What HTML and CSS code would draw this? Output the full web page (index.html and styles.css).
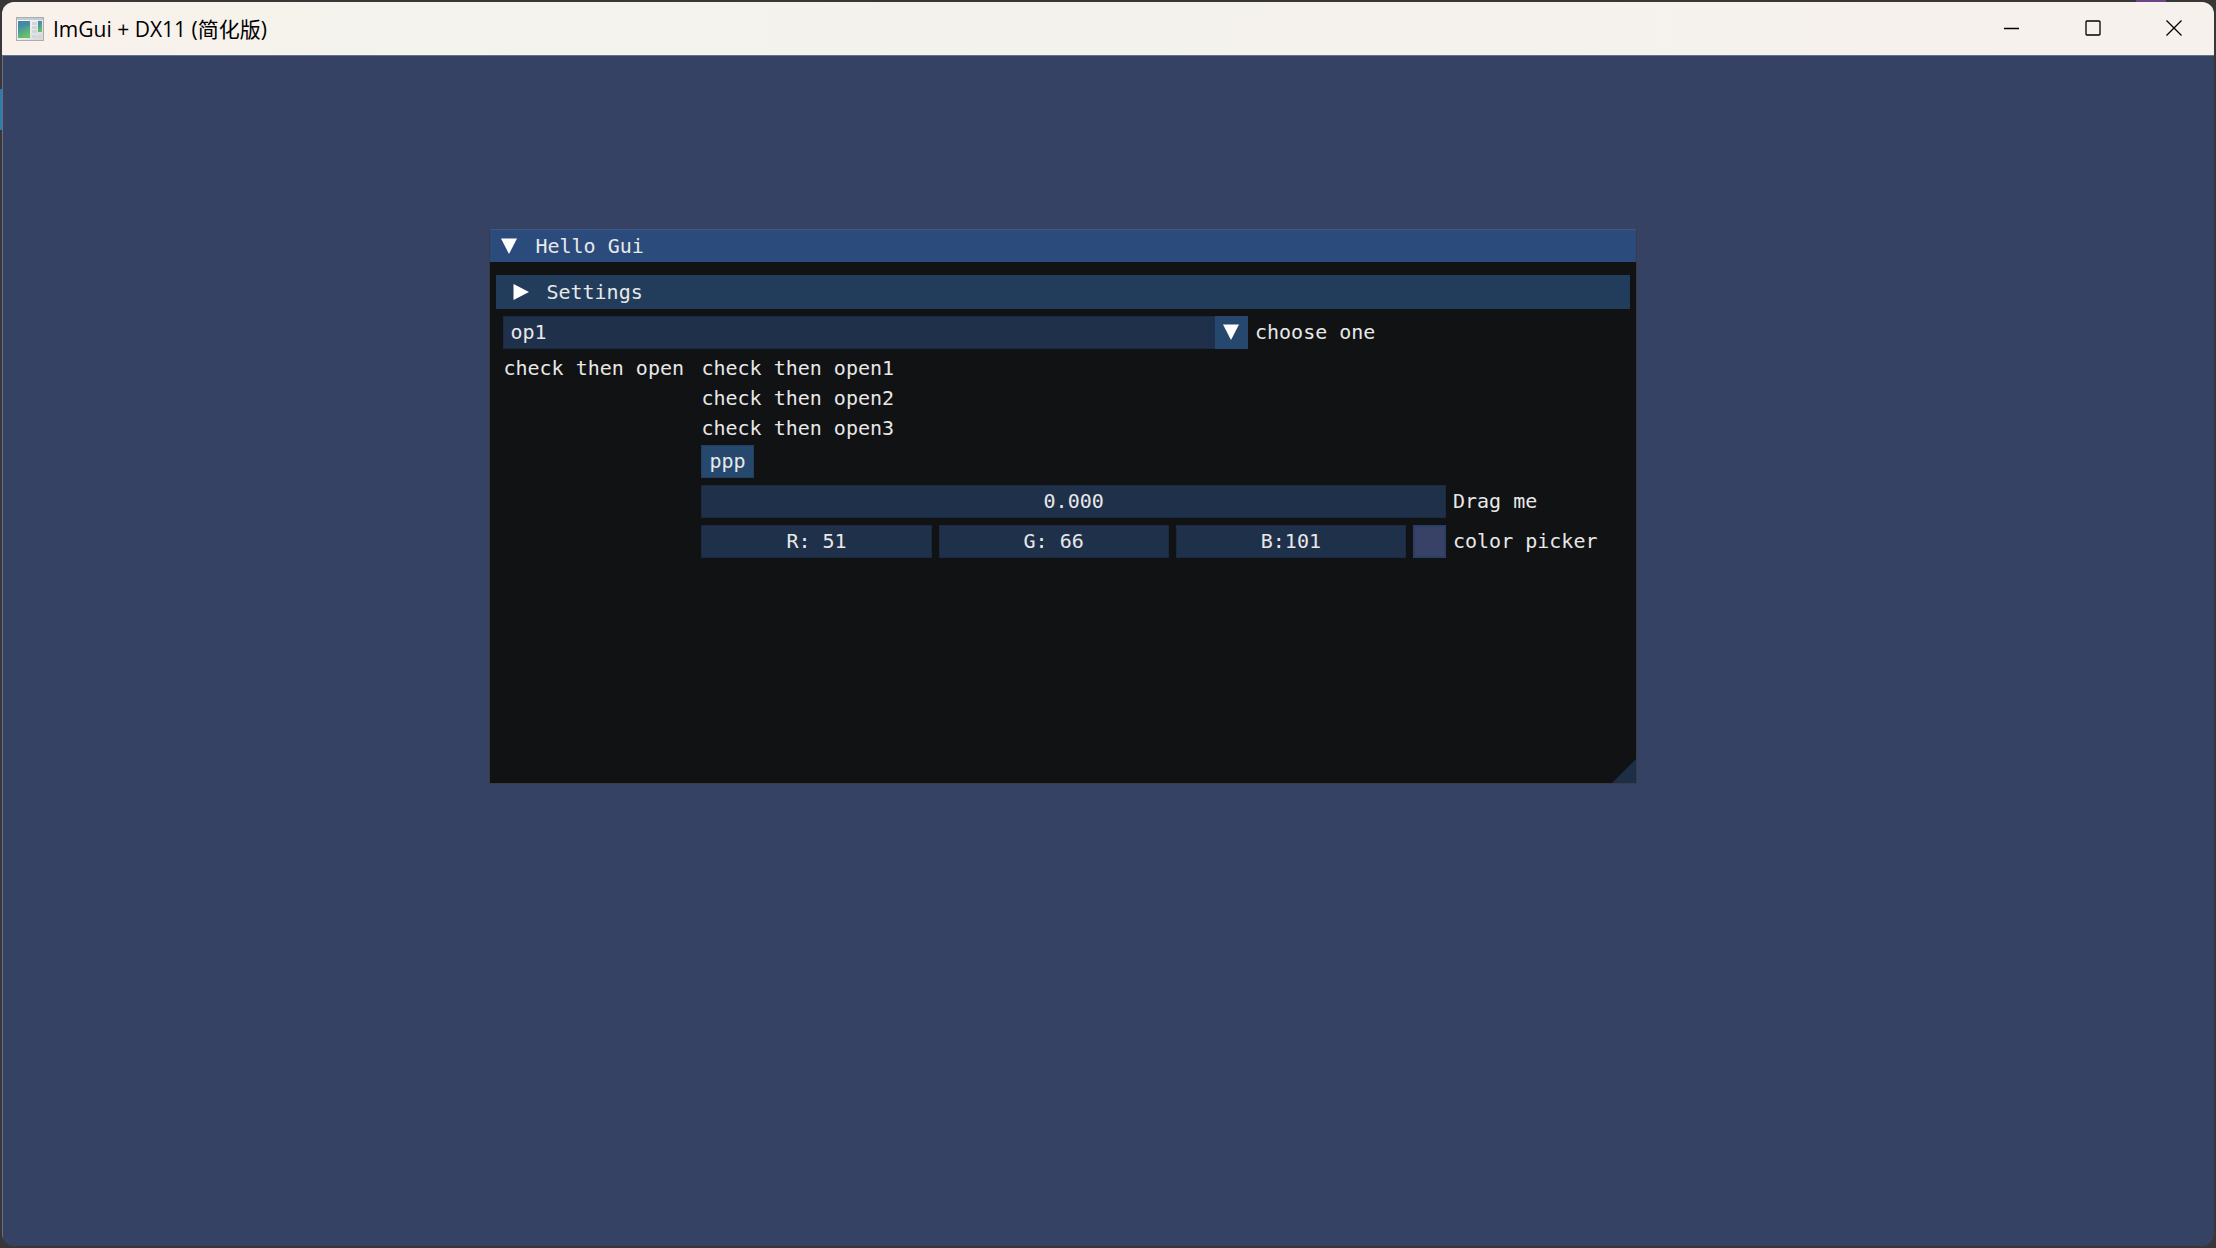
FILE: index.html
```html
<!DOCTYPE html>
<html lang="zh-CN">
<head>
<meta charset="utf-8">
<meta name="viewport" content="width=device-width,initial-scale=1">
<title>ImGui + DX11 (简化版)</title>
<link rel="stylesheet" href="styles.css">
</head>
<body>

<div class="app">
  <!-- ======= TITLE BAR ======= -->
  <header class="titlebar">
    <svg class="app-icon" viewBox="0 0 28 24" aria-hidden="true">
      <defs>
        <linearGradient id="pane" x1="0" y1="0" x2="0.4" y2="1">
          <stop offset="0" stop-color="#4682ad"/>
          <stop offset="0.5" stop-color="#4a9c98"/>
          <stop offset="1" stop-color="#6abf68"/>
        </linearGradient>
        <linearGradient id="frame" x1="0" y1="0" x2="1" y2="1">
          <stop offset="0" stop-color="#ffffff"/>
          <stop offset="1" stop-color="#d4d6d8"/>
        </linearGradient>
      </defs>
      <rect x="0.5" y="0.5" width="27" height="23" fill="url(#frame)" stroke="#a9adb2"/>
      <rect x="1" y="1" width="26" height="2" fill="#c3cbd5"/>
      <rect x="2" y="4" width="12" height="17" fill="url(#pane)"/>
      <path d="M2 12Q7 8 14 9V4H2z" fill="#4782aa" opacity=".6"/>
      <path d="M16 5h5v3h-5zM16 9h5v3h-5zM16 13h5v3h-5zM16 18h5v3h-5zM22 18h4v3h-4z" fill="#d3d6d9"/>
      <rect x="22" y="4" width="4" height="11" fill="url(#pane)"/>
    </svg>
    <h1 class="app-title">ImGui + DX11 (简化版)</h1>
    <div class="window-controls">
      <button class="win-btn" aria-label="最小化"><svg viewBox="0 0 16 16"><path d="M0 8.5h15"/></svg></button>
      <button class="win-btn" aria-label="最大化"><svg viewBox="0 0 16 16"><rect x="1" y="1" width="14" height="14" rx="1"/></svg></button>
      <button class="win-btn" aria-label="关闭"><svg viewBox="0 0 16 16"><path d="M.5.5l15 15M15.5.5l-15 15"/></svg></button>
    </div>
  </header>

  <!-- ======= CLIENT AREA ======= -->
  <main class="viewport">
    <section class="gui-window">
      <button class="gui-title">
        <svg class="arrow" viewBox="0 0 18 18"><path d="M1 1.5h16L9 17z"/></svg>
        Hello Gui
      </button>

      <div class="gui-body">
        <button class="gui-header">
          <svg class="arrow" viewBox="0 0 18 18"><path d="M1.5 1v16L17 9z"/></svg>
          Settings
        </button>

        <div class="row">
          <div class="combo item">
            <select id="combo" class="field">
              <option>op1</option>
            </select>
            <span class="combo-btn"><svg class="arrow" viewBox="0 0 18 18"><path d="M1 1.5h16L9 17z"/></svg></span>
          </div>
          <label for="combo">choose one</label>
        </div>

        <div class="split">
          <p>check then open</p>
          <div class="group">
            <p>check then open1</p>
            <p>check then open2</p>
            <p>check then open3</p>
            <button class="gui-btn">ppp</button>
            <div class="row">
              <input id="drag" class="field item" type="text" value="0.000">
              <label for="drag">Drag me</label>
            </div>
            <div class="row">
              <div class="color-edit item">
                <input class="field" type="text" value="R: 51" aria-label="R">
                <input class="field" type="text" value="G: 66" aria-label="G">
                <input class="field" type="text" value="B:101" aria-label="B">
                <button id="swatch" class="swatch"></button>
              </div>
              <label for="swatch">color picker</label>
            </div>
          </div>
        </div>
      </div>

      <svg class="grip" viewBox="0 0 24 24" aria-hidden="true"><path d="M24 0v24H0z"/></svg>
    </section>
  </main>
</div>

</body>
</html>
```
FILE: styles.css
```css
:root{
  --desktop:#393637;
  --clear:#354264;
  --edge:#66708a;
  --window:#111214;
  --title:#2a4b7b;
  --header:#223c5c;
  --frame:#1f304b;
  --button:#26486f;
  --border:#3a3b45;
  --text:#e8e8e8;
  --gap:7px;
}

*{margin:0;padding:0;box-sizing:border-box;}
body{
  height:100vh;
  padding:2px;
  background:
    linear-gradient(#6a4688,#6a4688) 97.7% 0/30px 2px no-repeat,
    linear-gradient(#2f7cab,#2f7cab) 0 89px/2px 41px no-repeat,
    var(--desktop);
}
button,input,select{font:inherit;color:inherit;border:none;border-radius:0;}

/* ---------- APP WINDOW ---------- */
.app{display:flex;flex-direction:column;height:100%;border-radius:12px;overflow:hidden;background:var(--clear);}
.titlebar{
  display:flex;align-items:center;
  height:54px;padding-left:14px;
  background:linear-gradient(90deg,#faf1eb,#f4f3ed 18%,#f4f2ed 50%,#f7f1ed);
  border-bottom:1px solid var(--edge);
  color:#000;
}
.app-icon{width:28px;height:24px;margin-right:9px;}
.app-title{font:400 21px/28px "Open Sans","Noto Sans CJK SC",sans-serif;}
.window-controls{display:flex;align-self:stretch;margin-left:auto;}
.win-btn{width:81px;padding-bottom:2px;background:none;display:flex;align-items:center;justify-content:center;}
.win-btn:hover{background:#e6e1dd;}
.win-btn svg{width:16px;height:16px;fill:none;stroke:#000;stroke-width:1.3;}
.viewport{position:relative;flex:1;border-left:1px solid var(--edge);}

/* ---------- GUI WINDOW ---------- */
.gui-window{
  position:absolute;left:22%;top:14.5%;
  width:51.9%;height:46.7%;
  container-type:inline-size;
  background:var(--window);
  border:1px solid var(--border);
  color:var(--text);
  font:20px/30px "DejaVu Sans Mono",monospace;
}
.gui-title{
  display:flex;align-items:center;gap:17px;
  width:100%;height:32px;padding-left:10px;
  background:var(--title);
  box-shadow:0 -1px 0 #43567f;
}
.arrow{width:18px;height:18px;fill:#fff;}
.gui-body{display:flex;flex-direction:column;gap:var(--gap);padding:13px;}
.gui-header{
  display:flex;align-items:center;gap:16px;
  height:34px;margin:0 -7px;padding-left:16px;
  background:var(--header);
}
.row{display:flex;align-items:center;gap:var(--gap);white-space:nowrap;}
.item{width:65cqw;}
.field,.gui-btn,.swatch{height:33px;border:1px solid #1b2a41;}
.field{background:var(--frame);text-align:center;min-width:0;}

.combo{display:flex;}
.combo .field{flex:1;appearance:none;padding-left:6px;text-align:left;border-right:none;}
.combo-btn{display:flex;align-items:center;justify-content:center;width:33px;background:var(--button);pointer-events:none;}

.split{display:grid;grid-template-columns:184px 1fr;gap:14px;margin-top:-3px;}
.group{display:flex;flex-direction:column;align-items:flex-start;}
.group .row{margin-top:var(--gap);}
.group .gui-btn{margin-top:2px;}
.gui-btn{padding:0 7px;background:var(--button);border-color:#223f61;}
.gui-btn:hover{background:#4296fa;}
.color-edit{display:flex;gap:var(--gap);}
.color-edit .field{flex:1;}
.swatch{width:33px;background:#374266;border:2px solid #2b3f66;}

.grip{position:absolute;right:0;bottom:0;width:24px;height:24px;fill:#1c2f47;}
```
